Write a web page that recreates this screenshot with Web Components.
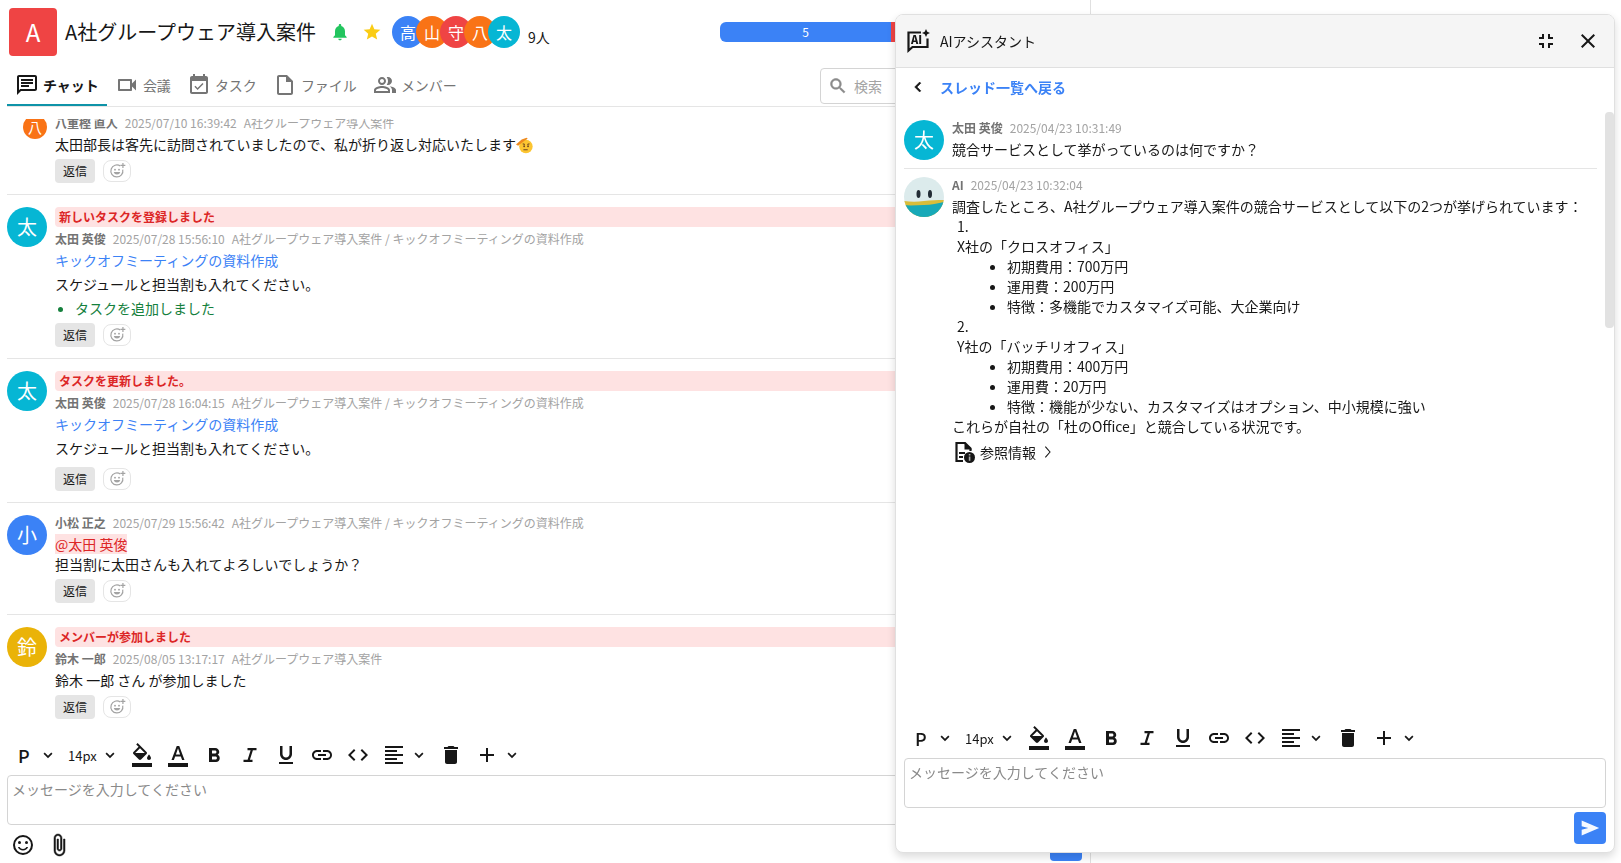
<!DOCTYPE html>
<html lang="ja">
<head>
<meta charset="utf-8">
<meta name="viewport" content="width=device-width, initial-scale=1">
<title>A社グループウェア導入案件</title>
<style>
  html, body { margin: 0; height: 100%; }
  body {
    background: #fff;
    color: #171717;
    font-family: "Noto Sans CJK JP", "Noto Sans", sans-serif;
    font-size: 14px;
    line-height: 20px;
    overflow: hidden;
  }
</style>
</head>
<body>
<gw-app></gw-app>

<script>
const ICONS = {
  chat: '<path d="M4 4h16v12H5.17L4 17.17V4m0-2c-1.1 0-1.99.9-1.99 2L2 22l4-4h14c1.1 0 2-.9 2-2V4c0-1.1-.9-2-2-2H4zm2 10h8v2H6v-2zm0-3h12v2H6V9zm0-3h12v2H6V6z"/>',
  video: '<path d="M15 8v8H5V8h10m1-2H4c-.55 0-1 .45-1 1v10c0 .55.45 1 1 1h12c.55 0 1-.45 1-1v-3.5l4 4v-11l-4 4V7c0-.55-.45-1-1-1z"/>',
  task: '<path d="M16.53 11.06L15.47 10l-4.88 4.88-2.12-2.12-1.06 1.06L10.59 17l5.94-5.94zM19 3h-1V1h-2v2H8V1H6v2H5c-1.11 0-1.99.9-1.99 2L3 19c0 1.1.89 2 2 2h14c1.1 0 2-.9 2-2V5c0-1.1-.9-2-2-2zm0 16H5V8h14v11z"/>',
  file: '<path d="M14 2H6c-1.1 0-1.99.9-1.99 2L4 20c0 1.1.89 2 1.99 2H18c1.1 0 2-.9 2-2V8l-6-6zM6 20V4h7v5h5v11H6z"/>',
  members: '<path d="M16.67 13.13C18.04 14.06 19 15.32 19 17v3h4v-3c0-2.18-3.57-3.47-6.33-3.87zM15 12c2.21 0 4-1.79 4-4s-1.79-4-4-4c-.47 0-.91.1-1.33.24C14.5 5.27 15 6.58 15 8s-.5 2.73-1.33 3.76c.42.14.86.24 1.33.24zM9 12c2.21 0 4-1.79 4-4s-1.79-4-4-4-4 1.79-4 4 1.79 4 4 4zm0-6c1.1 0 2 .9 2 2s-.9 2-2 2-2-.9-2-2 .9-2 2-2zM9 13c-2.67 0-8 1.34-8 4v3h16v-3c0-2.66-5.33-4-8-4zm6 5H3v-.99C3.2 16.29 6.3 15 9 15s5.8 1.29 6 2v1z"/>',
  search: '<path d="M15.5 14h-.79l-.28-.27C15.41 12.59 16 11.11 16 9.5 16 5.91 13.09 3 9.5 3S3 5.91 3 9.5 5.91 16 9.5 16c1.61 0 3.09-.59 4.23-1.57l.27.28v.79l5 4.99L20.49 19l-4.99-5zm-6 0C7.01 14 5 11.99 5 9.5S7.01 5 9.5 5 14 7.01 14 9.5 11.99 14 9.5 14z" stroke="currentColor" stroke-width=".6"/>',
  bell: '<path d="M12 22c1.1 0 2-.9 2-2h-4c0 1.1.89 2 2 2zm6-6v-5c0-3.07-1.64-5.64-4.5-6.32V4c0-.83-.67-1.5-1.5-1.5s-1.5.67-1.5 1.5v.68C7.63 5.36 6 7.92 6 11v5l-2 2v1h16v-1l-2-2z"/>',
  star: '<path d="M12 17.27L18.18 21l-1.64-7.03L22 9.24l-7.19-.61L12 2 9.19 8.63 2 9.24l5.46 4.73L5.82 21z"/>',
  fill: '<path d="M16.56 8.94L7.62 0 6.21 1.41l2.38 2.38-5.15 5.15c-.59.59-.59 1.54 0 2.12l5.5 5.5c.29.29.68.44 1.06.44s.77-.15 1.06-.44l5.5-5.5c.59-.58.59-1.53 0-2.12zM5.21 10L10 5.21 14.79 10H5.21zM19 11.5s-2 2.17-2 3.5c0 1.1.9 2 2 2s2-.9 2-2c0-1.33-2-3.5-2-3.5zM2 20h20v4H2v-4z"/>',
  color: '<path d="M2 20h20v4H2v-4zm3.49-3h2.42l1.27-3.58h5.65L16.09 17h2.42L13.25 3h-2.5L5.49 17zm4.42-5.61l2.03-5.79h.12l2.03 5.79H9.91z"/>',
  bold: '<path d="M15.6 11.79c.97-.67 1.65-1.77 1.65-2.79 0-2.26-1.75-4-4-4H7v14h7.04c2.09 0 3.71-1.7 3.71-3.79 0-1.52-.86-2.82-2.15-3.42zM10 7.5h3c.83 0 1.5.67 1.5 1.5s-.67 1.5-1.5 1.5h-3v-3zm3.5 9H10v-3h3.5c.83 0 1.5.67 1.5 1.5s-.67 1.5-1.5 1.5z"/>',
  italic: '<path d="M9.5 5v2.2h3.1L9.600 16.800H5.500V19h9v-2.200h-2.600l3-9.600h3.600V5z"/>',
  underline: '<path d="M12 17c3.31 0 6-2.69 6-6V3h-2.5v8c0 1.93-1.57 3.5-3.5 3.5S8.5 12.93 8.5 11V3H6v8c0 3.31 2.69 6 6 6zm-7 2v2h14v-2H5z"/>',
  link: '<path d="M3.9 12c0-1.71 1.39-3.1 3.1-3.1h4V7H7c-2.76 0-5 2.24-5 5s2.24 5 5 5h4v-1.9H7c-1.71 0-3.1-1.39-3.1-3.1zM8 13h8v-2H8v2zm9-6h-4v1.9h4c1.71 0 3.1 1.39 3.1 3.1s-1.39 3.1-3.1 3.1h-4V17h4c2.76 0 5-2.24 5-5s-2.24-5-5-5z"/>',
  code: '<path d="M9.4 16.6L4.8 12l4.6-4.6L8 6l-6 6 6 6 1.4-1.4zm5.2 0l4.6-4.6-4.6-4.6L16 6l6 6-6 6-1.4-1.4z"/>',
  align: '<path d="M15 15H3v2h12v-2zm0-8H3v2h12V7zM3 13h18v-2H3v2zm0 8h18v-2H3v2zM3 3v2h18V3H3z"/>',
  trash: '<path d="M6 19c0 1.1.9 2 2 2h8c1.1 0 2-.9 2-2V7H6v12zM19 4h-3.5l-1-1h-5l-1 1H5v2h14V4z"/>',
  plus: '<path d="M19 13h-6v6h-2v-6H5v-2h6V5h2v6h6v2z"/>',
  down: '<path d="M16.9 8.2L12 13.1 7.1 8.2 5.3 10l6.7 6.7 6.7-6.7z"/>',
  left: '<path d="M15.41 7.41L14 6l-6 6 6 6 1.41-1.41L10.83 12z" stroke="currentColor" stroke-width=".6"/>',
  right: '<path d="M8 4l7 8-7 8" fill="none" stroke="currentColor" stroke-width="1.6"/>',
  smile: '<circle cx="15.5" cy="9.5" r="1.5"/><circle cx="8.5" cy="9.5" r="1.5"/><path d="M12 16c-1.48 0-2.75-.81-3.45-2H6.88c.8 2.05 2.79 3.5 5.12 3.5s4.32-1.45 5.12-3.5h-1.67c-.7 1.19-1.97 2-3.45 2z"/><circle cx="12" cy="12" r="9" fill="none" stroke="currentColor" stroke-width="2"/>',
  clip: '<path d="M16.5 6v11.5c0 2.21-1.79 4-4 4s-4-1.79-4-4V5c0-1.38 1.12-2.5 2.5-2.5s2.5 1.12 2.5 2.5v10.5c0 .55-.45 1-1 1s-1-.45-1-1V6H10v9.5c0 1.38 1.12 2.5 2.5 2.5s2.5-1.12 2.5-2.5V5c0-2.21-1.79-4-4-4S7 2.790 7 5v12.500c0 3.040 2.460 5.500 5.500 5.500s5.500-2.460 5.500-5.500V6h-1.500z" stroke="currentColor" stroke-width=".5"/>',
  close: '<path d="M19 6.41L17.59 5 12 10.59 6.41 5 5 6.41 10.59 12 5 17.59 6.41 19 12 13.41 17.59 19 19 17.59 13.41 12z"/>',
  shrink: '<path d="M5 16h3v3h2v-5H5v2zm3-8H5v2h5V5H8v3zm6 11h2v-3h3v-2h-5v5zm2-11V5h-2v5h5V8h-3z"/>',
  send: '<path d="M2 3L23 12 2 21v-7l8-2-8-2z" fill-opacity=".95"/>',
  react: '<path d="M17 4.600A9 9 0 1 0 20.600 10" fill="none" stroke="currentColor" stroke-width="1.800"/><circle cx="15" cy="10" r="1.400"/><circle cx="9" cy="10" r="1.400"/><path d="M7 13.500h10a5.200 5.200 0 0 1-10 0z"/><path d="M20 0h1.800v2.800h2.700v1.800h-2.700v2.800H20V4.600h-2.800V2.800H20z"/>',
  aichat: '<path d="M15 3.500H2.500v18L6.500 18H21.500v-8.500" fill="none" stroke="currentColor" stroke-width="2.200"/><text x="5" y="15.200" font-size="11" font-weight="900">AI</text><path d="M20 0l1.300 2.700L24 4l-2.700 1.300L20 8l-1.300-2.700L16 4l2.700-1.300z"/>',
  docinfo: '<path d="M11 21H4.500V3H13l5.500 5.500V11" fill="none" stroke="currentColor" stroke-width="2.200"/><path d="M12.500 2v7.500H20zM7 12h6v2H7zM7 16h4v2H7z"/><circle cx="17.500" cy="17.500" r="5.500"/><path d="M16.800 14h1.600v1.600h-1.600zM16.800 16.500h1.600v4.300h-1.600z" fill="#aaa"/>',
  salute: '<circle cx="14" cy="13.500" r="9.500" fill="#fcc531"/><path d="M9.500 9.500l3 1M16 10.500l3-1M10.500 18h6" fill="none" stroke="#6d4520" stroke-width="1.500"/><circle cx="11.500" cy="13" r="1.300" fill="#6d4520"/><circle cx="17" cy="13" r="1.300" fill="#6d4520"/><path d="M0 10.500L8 3.500 15 1l1.500 1.500-4 2.500-6 4.500L3 12.500z" fill="#ee8a1d"/>'
};

function define(name, markup, render) {
  const template = document.createElement('template');
  template.innerHTML = markup;
  customElements.define(name, class extends HTMLElement {
    connectedCallback() {
      if (this.shadowRoot) return;
      const root = this.attachShadow({ mode: 'open' });
      root.append(template.content.cloneNode(true));
      if (render) render(this, root);
    }
  });
}

define('gw-icon', `
  <style>
    :host { display: inline-block; flex: none; width: var(--size, 24px); height: var(--size, 24px); }
    svg { display: block; width: 100%; height: 100%; fill: currentColor; overflow: visible; }
  </style>
  <svg viewBox="0 0 24 24" aria-hidden="true"></svg>`,
  (el, root) => { root.querySelector('svg').innerHTML = ICONS[el.getAttribute('name')]; });

define('gw-avatar', `
  <style>
    :host {
      display: flex; align-items: center; justify-content: center; flex: none;
      width: var(--size, 40px); height: var(--size, 40px);
      border-radius: 50%; overflow: hidden; color: #fff; font-size: 20px; line-height: 24px;
    }
    :host([size="32"]) { --size: 32px; font-size: 16px; }
    :host([size="24"]) { --size: 24px; font-size: 14px; }
    :host([color="blue"]) { background: #3b82f6; }
    :host([color="orange"]) { background: #f97316; }
    :host([color="red"]) { background: #ef4444; }
    :host([color="cyan"]) { background: #06b6d4; }
    :host([color="yellow"]) { background: #eab308; }
  </style>
  <slot></slot>`);

define('gw-bot', `
  <style>:host, svg { display: block; width: 40px; height: 40px; }</style>
  <svg viewBox="0 0 40 40" role="img" aria-label="AI">
    <rect width="40" height="40" fill="#dcebec"/>
    <path d="M0 24c7 1 13 1 20 0s13-1 20-1v17H0z" fill="#d9bd3a"/>
    <path d="M0 28c7 1 13 0 20 0s14-2 20-3v15H0z" fill="#17a9b8"/>
    <ellipse cx="14.500" cy="17" rx="2" ry="4" fill="#222c35"/>
    <ellipse cx="26" cy="17" rx="2" ry="4" fill="#222c35"/>
  </svg>`);

define('gw-tab', `
  <style>
    :host { display: block; }
    a {
      display: flex; align-items: center; gap: 4px; height: 38px; padding: 0 8px;
      color: #757575; text-decoration: none; border-bottom: 2px solid transparent;
    }
    :host([current]) a { color: #171717; font-weight: 700; border-color: #0e93a8; }
  </style>
  <a href="#"><gw-icon></gw-icon><span><slot></slot></span></a>`,
  (el, root) => {
    const icon = document.createElement('gw-icon');
    icon.setAttribute('name', el.getAttribute('icon'));
    root.querySelector('gw-icon').replaceWith(icon);
    if (el.hasAttribute('current')) root.querySelector('a').setAttribute('aria-current', 'page');
  });

define('gw-message', `
  <style>
    :host { display: flex; gap: 8px; padding: 12px 0 11px; border-bottom: 1px solid #e5e5e5; flex: none; }
    :host(:last-child) { border-color: transparent; }
    .face { width: 40px; flex: none; display: flex; justify-content: flex-end; align-items: flex-start; }
    .body { flex: 1; min-width: 0; }
    .notice {
      height: 20px; margin-bottom: 4px; padding: 0 4px; border-radius: 4px;
      background: #fee2e2; color: #dc2626; font-size: 12px; font-weight: 700;
    }
    .meta { display: flex; gap: 7px; margin-bottom: 3px; font-size: 12px; line-height: 16px; color: #a3a3a3; white-space: nowrap; }
    .meta b { color: #737373; }
    .actions { display: flex; align-items: center; gap: 8px; margin-top: 5px; }
    :host([roomy]) .actions { margin-top: 9px; }
    button { font: inherit; padding: 0; cursor: pointer; box-sizing: border-box; }
    .reply { width: 40px; height: 24px; border: 0; border-radius: 4px; background: #e5e5e5; color: #171717; font-size: 12px; }
    .react {
      display: flex; align-items: center; justify-content: center; width: 28px; height: 22px;
      border: 1px solid #e5e5e5; border-radius: 8px; background: #fff; color: #a3a3a3; --size: 16px;
    }
    [hidden] { display: none; }
  </style>
  <div class="face"><slot name="avatar"></slot></div>
  <div class="body">
    <div class="notice"></div>
    <div class="meta"><b></b><time></time><span class="room"></span></div>
    <slot></slot>
    <div class="actions">
      <button class="reply" type="button">返信</button>
      <button class="react" type="button" aria-label="リアクション"><gw-icon name="react"></gw-icon></button>
    </div>
  </div>`,
  (el, root) => {
    const notice = root.querySelector('.notice');
    notice.textContent = el.getAttribute('notice') || '';
    notice.hidden = !el.hasAttribute('notice');
    root.querySelector('b').textContent = el.getAttribute('author');
    root.querySelector('time').textContent = el.getAttribute('time');
    const room = root.querySelector('.room');
    room.textContent = el.getAttribute('room') || '';
    room.hidden = !el.hasAttribute('room');
    root.querySelector('.actions').hidden = el.hasAttribute('plain');
  });

define('gw-composer', `
  <style>
    :host { display: block; flex: none; }
    .tools { display: flex; align-items: center; gap: 12px; padding: 12px 4px 8px; }
    button, label { display: flex; align-items: center; gap: 5px; height: 24px; padding: 0; border: 0; background: none; color: #171717; cursor: pointer; }
    .chev { --size: 16px; }
    label { position: relative; }
    select {
      appearance: none; box-sizing: border-box; border: 0; margin: 0; background: none; color: #171717;
      font-family: inherit; height: 24px; padding: 0;
    }
    .block { width: 45px; padding: 0 0 4px 7px; font-size: 18px; font-weight: 500; }
    .size { width: 50px; font-size: 13px; }
    label .chev { position: absolute; right: 0; top: 4px; pointer-events: none; }
    textarea {
      display: block; box-sizing: border-box; width: 100%; height: 50px; padding: 3px 4px; resize: none;
      border: 1px solid #d4d4d4; border-radius: 4px; background: #fff; color: #171717;
      font: inherit; outline: 0;
    }
    textarea::placeholder { color: #8a8a8a; }
    .foot { display: flex; align-items: center; justify-content: space-between; height: 32px; margin-top: 4px; }
    .left { display: flex; gap: 12px; padding-left: 4px; }
    .send { justify-content: center; width: 32px; height: 32px; border-radius: 4px; background: #3b82f6; color: #fff; --size: 20px; }
  </style>
  <div class="tools" role="toolbar" aria-label="書式">
    <label><select class="block" aria-label="段落"><option>P</option></select><gw-icon class="chev" name="down"></gw-icon></label>
    <label><select class="size" aria-label="文字サイズ"><option>14px</option></select><gw-icon class="chev" name="down"></gw-icon></label>
    <button type="button" aria-label="背景色"><gw-icon name="fill"></gw-icon></button>
    <button type="button" aria-label="文字色"><gw-icon name="color"></gw-icon></button>
    <button type="button" aria-label="太字"><gw-icon name="bold"></gw-icon></button>
    <button type="button" aria-label="斜体"><gw-icon name="italic"></gw-icon></button>
    <button type="button" aria-label="下線"><gw-icon name="underline"></gw-icon></button>
    <button type="button" aria-label="リンク"><gw-icon name="link"></gw-icon></button>
    <button type="button" aria-label="コード"><gw-icon name="code"></gw-icon></button>
    <button type="button" aria-label="配置"><gw-icon name="align"></gw-icon><gw-icon class="chev" name="down"></gw-icon></button>
    <button type="button" aria-label="削除"><gw-icon name="trash"></gw-icon></button>
    <button type="button" aria-label="追加"><gw-icon name="plus"></gw-icon><gw-icon class="chev" name="down"></gw-icon></button>
  </div>
  <textarea aria-label="メッセージ" placeholder="メッセージを入力してください"></textarea>
  <div class="foot">
    <div class="left"><slot></slot></div>
    <button class="send" type="button" aria-label="送信"><gw-icon name="send"></gw-icon></button>
  </div>`);

define('gw-room-header', `
  <style>
    :host { display: block; flex: none; }
    .top { display: flex; align-items: center; height: 48px; padding: 8px 0 10px 2px; }
    .logo {
      display: flex; align-items: center; justify-content: center; width: 48px; height: 48px; margin-right: 8px;
      border-radius: 4px; background: #ef4444; color: #fff; font-size: 24px; line-height: 32px;
    }
    h1 { margin: 0 14px 0 0; font-size: 20px; line-height: 32px; font-weight: 400; white-space: nowrap; }
    .flag { padding: 0; border: 0; background: none; display: flex; --size: 20px; }
    .bell { color: #22c55e; margin-right: 12px; }
    .star { color: #facc15; margin-right: 10px; }
    .faces { display: flex; }
    .faces gw-avatar + gw-avatar { margin-left: -8px; }
    .count { margin-left: 8px; padding-top: 10px; }
    .progress {
      display: flex; width: 362px; height: 20px; margin-left: auto; border-radius: 6px; overflow: hidden;
      color: #fff; font-size: 12px; text-align: center;
    }
    .done { flex: 171; background: #3b82f6; }
    .late { flex: 191; background: #ef4444; }
    .bar { display: flex; align-items: flex-start; border-bottom: 1px solid #e5e5e5; }
    nav { display: flex; }
    .search {
      display: flex; align-items: center; gap: 6px; box-sizing: border-box; width: 262px; height: 36px;
      margin: 2px 0 0 auto; padding: 0 7px; border: 1px solid #d4d4d4; border-radius: 4px; color: #8a8a8a; --size: 20px;
    }
    input { flex: 1; min-width: 0; padding: 0; border: 0; outline: 0; background: none; font: inherit; }
    input::placeholder { color: #a3a3a3; }
  </style>
  <div class="top">
    <div class="logo">A</div>
    <h1>A社グループウェア導入案件</h1>
    <button class="flag bell" type="button" aria-label="通知"><gw-icon name="bell"></gw-icon></button>
    <button class="flag star" type="button" aria-label="お気に入り"><gw-icon name="star"></gw-icon></button>
    <div class="faces">
      <gw-avatar size="32" color="blue">高</gw-avatar>
      <gw-avatar size="32" color="orange">山</gw-avatar>
      <gw-avatar size="32" color="red">守</gw-avatar>
      <gw-avatar size="32" color="orange">八</gw-avatar>
      <gw-avatar size="32" color="cyan">太</gw-avatar>
    </div>
    <span class="count">9人</span>
    <div class="progress"><div class="done">5</div><div class="late"></div></div>
  </div>
  <div class="bar">
    <nav>
      <gw-tab icon="chat" current>チャット</gw-tab>
      <gw-tab icon="video">会議</gw-tab>
      <gw-tab icon="task">タスク</gw-tab>
      <gw-tab icon="file">ファイル</gw-tab>
      <gw-tab icon="members">メンバー</gw-tab>
    </nav>
    <label class="search"><gw-icon name="search"></gw-icon><input type="search" placeholder="検索" aria-label="検索"></label>
  </div>`);

define('gw-assistant', `
  <style>
    :host {
      display: flex; flex-direction: column; box-sizing: border-box; background: #fff;
      border: 1px solid #e0e0e0; border-radius: 8px; overflow: hidden;
      box-shadow: 0 4px 8px rgba(0, 0, 0, .14);
    }
    header {
      display: flex; align-items: center; height: 52px; padding: 0 14px 0 10px;
      background: #f5f5f5; border-bottom: 1px solid #e0e0e0; flex: none;
    }
    h2 { margin: 0 auto 0 10px; font-size: 14px; font-weight: 400; }
    button { display: flex; padding: 0; border: 0; background: none; color: #171717; font: inherit; cursor: pointer; }
    .close { margin-left: 18px; }
    .back {
      display: flex; align-items: center; gap: 12px; height: 38px; margin-bottom: 6px; padding: 0 12px; flex: none;
      color: #3b82f6; font-weight: 700; text-decoration: none;
    }
    .back gw-icon { --size: 20px; color: #171717; }
    .thread { position: relative; flex: 1; min-height: 0; padding: 0 17px 0 8px; }
    .thumb { position: absolute; top: 0; right: 0; width: 9px; height: 216px; border-radius: 4px; background: #e2e2e2; }
    gw-message { padding: 8px 0; }
    gw-message:last-of-type { border-color: transparent; }
    ol, ul { margin: 0; padding: 0; }
    ol { list-style-position: inside; padding-left: 5px; }
    ul { list-style: disc outside; padding-left: 50px; }
    p { margin: 0; }
    .refs { align-items: center; gap: 4px; margin-top: 4px; height: 24px; }
    .refs gw-icon:last-child { --size: 16px; }
    gw-composer { padding: 0 8px 8px; }
  </style>
  <header>
    <gw-icon name="aichat"></gw-icon>
    <h2>AIアシスタント</h2>
    <button type="button" aria-label="縮小"><gw-icon name="shrink"></gw-icon></button>
    <button class="close" type="button" aria-label="閉じる"><gw-icon name="close"></gw-icon></button>
  </header>
  <a class="back" href="#"><gw-icon name="left"></gw-icon>スレッド一覧へ戻る</a>
  <div class="thread">
    <gw-message plain author="太田 英俊" time="2025/04/23 10:31:49">
      <gw-avatar slot="avatar" color="cyan">太</gw-avatar>
      <p>競合サービスとして挙がっているのは何ですか？</p>
    </gw-message>
    <gw-message plain author="AI" time="2025/04/23 10:32:04">
      <gw-avatar slot="avatar"><gw-bot></gw-bot></gw-avatar>
      <p>調査したところ、A社グループウェア導入案件の競合サービスとして以下の2つが挙げられています：</p>
      <ol>
        <li><p>X社の「クロスオフィス」</p>
          <ul><li>初期費用：700万円</li><li>運用費：200万円</li><li>特徴：多機能でカスタマイズ可能、大企業向け</li></ul>
        </li>
        <li><p>Y社の「バッチリオフィス」</p>
          <ul><li>初期費用：400万円</li><li>運用費：20万円</li><li>特徴：機能が少ない、カスタマイズはオプション、中小規模に強い</li></ul>
        </li>
      </ol>
      <p>これらが自社の「杜のOffice」と競合している状況です。</p>
      <button class="refs" type="button"><gw-icon name="docinfo"></gw-icon>参照情報<gw-icon name="right"></gw-icon></button>
    </gw-message>
    <div class="thumb"></div>
  </div>
  <gw-composer></gw-composer>`);

define('gw-app', `
  <style>
    :host { display: grid; grid-template-columns: minmax(0, 1fr) 530px; height: 100vh; }
    main { display: flex; flex-direction: column; min-height: 0; padding: 0 8px 2px 7px; border-right: 1px solid #e0e0e0; }
    .feed { display: flex; flex-direction: column; justify-content: flex-end; flex: 1; min-height: 0; margin-top: 12px; overflow: hidden; }
    p, ul { margin: 0; }
    p + p, p + ul { margin-top: 4px; }
    ul { padding-left: 20px; color: #15803d; }
    a { color: #3b82f6; text-decoration: none; }
    .mention { background: #fee2e2; color: #dc2626; }
    .emoji { --size: 17px; vertical-align: -4px; }
    .tool { display: flex; padding: 0; border: 0; background: none; color: #171717; }
    gw-assistant { position: fixed; top: 14px; right: 6px; bottom: 10px; width: 720px; }
  </style>
  <main>
    <gw-room-header></gw-room-header>
    <section class="feed">
      <gw-message author="八重樫 直人" time="2025/07/10 16:39:42" room="A社グループウェア導入案件">
        <gw-avatar slot="avatar" size="24" color="orange">八</gw-avatar>
        <p>太田部長は客先に訪問されていましたので、私が折り返し対応いたします<gw-icon class="emoji" name="salute"></gw-icon></p>
      </gw-message>
      <gw-message notice="新しいタスクを登録しました" author="太田 英俊" time="2025/07/28 15:56:10" room="A社グループウェア導入案件 / キックオフミーティングの資料作成">
        <gw-avatar slot="avatar" color="cyan">太</gw-avatar>
        <p><a href="#">キックオフミーティングの資料作成</a></p>
        <p>スケジュールと担当割も入れてください。</p>
        <ul><li>タスクを追加しました</li></ul>
      </gw-message>
      <gw-message roomy notice="タスクを更新しました。" author="太田 英俊" time="2025/07/28 16:04:15" room="A社グループウェア導入案件 / キックオフミーティングの資料作成">
        <gw-avatar slot="avatar" color="cyan">太</gw-avatar>
        <p><a href="#">キックオフミーティングの資料作成</a></p>
        <p>スケジュールと担当割も入れてください。</p>
      </gw-message>
      <gw-message author="小松 正之" time="2025/07/29 15:56:42" room="A社グループウェア導入案件 / キックオフミーティングの資料作成">
        <gw-avatar slot="avatar" color="blue">小</gw-avatar>
        <div><span class="mention">@太田 英俊</span></div>
        <div>担当割に太田さんも入れてよろしいでしょうか？</div>
      </gw-message>
      <gw-message notice="メンバーが参加しました" author="鈴木 一郎" time="2025/08/05 13:17:17" room="A社グループウェア導入案件">
        <gw-avatar slot="avatar" color="yellow">鈴</gw-avatar>
        <p>鈴木 一郎 さん が参加しました</p>
      </gw-message>
    </section>
    <gw-composer>
      <button class="tool" type="button" aria-label="絵文字"><gw-icon name="smile"></gw-icon></button>
      <button class="tool" type="button" aria-label="添付"><gw-icon name="clip"></gw-icon></button>
    </gw-composer>
  </main>
  <gw-assistant></gw-assistant>`);
</script>
</body>
</html>
